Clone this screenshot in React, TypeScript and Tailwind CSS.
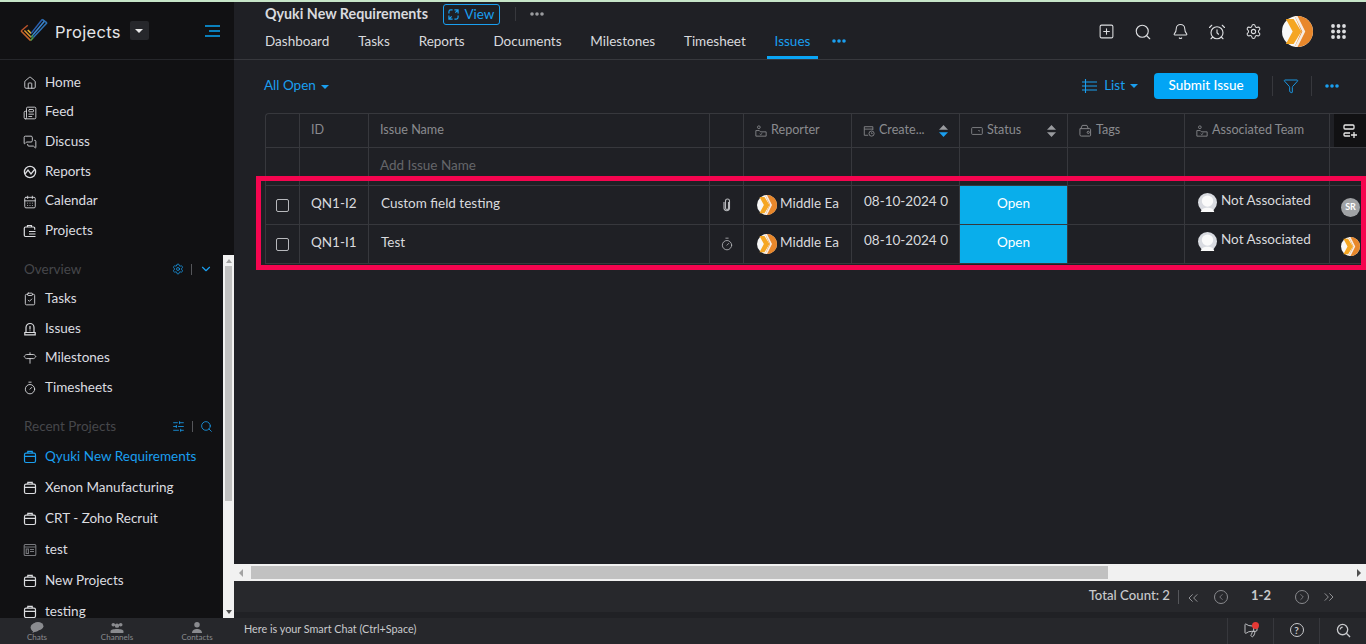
import type { ReactNode } from 'react'
import {
  AlarmClock,
  Bell,
  CalendarDays,
  ChevronDown,
  ChevronLeft,
  ChevronRight,
  ChevronsLeft,
  ChevronsRight,
  ClipboardCheck,
  Funnel,
  House,
  Megaphone,
  MessagesSquare,
  Newspaper,
  Search,
  Settings,
  Signpost,
  SlidersHorizontal,
  SquarePlus,
  Timer,
} from 'lucide-react'

const iconProps = { size: 14, strokeWidth: 1.5 }

function ProjectIcon({ className = '' }: { className?: string }) {
  return (
    <svg viewBox="0 0 14 14" className={`w-[14px] h-[14px] ${className}`} fill="none" stroke="currentColor" strokeWidth="1.2">
      <rect x="1.5" y="3.2" width="11" height="9.3" rx="1.5" />
      <path d="M4.8 3V1.4h4.4V3M1.5 6.4h11M6 6.4h2" />
    </svg>
  )
}

function ReportsIcon() {
  return (
    <svg viewBox="0 0 14 14" className="w-[14px] h-[14px]" fill="none" stroke="currentColor" strokeWidth="1.3">
      <circle cx="7" cy="7" r="5.6" />
      <path d="M2 9l3-4 3 4 4-5" />
    </svg>
  )
}

function ClientProjectIcon() {
  return (
    <svg viewBox="0 0 14 14" className="w-[14px] h-[14px]" fill="none" stroke="currentColor" strokeWidth="1.2">
      <path d="M4.5 3V1.5h4V3M9.5 12.5h-7a1.2 1.2 0 0 1-1.2-1.2V4.2A1.2 1.2 0 0 1 2.5 3h8a1.2 1.2 0 0 1 1.2 1.2v1.5" />
      <path d="M6 7.5h6.5M6 10h6.5M6 12.5h6.5" />
    </svg>
  )
}

function TemplateIcon() {
  return (
    <svg viewBox="0 0 14 14" className="w-[14px] h-[14px]" fill="none" stroke="currentColor" strokeWidth="1.1">
      <rect x="1.2" y="1.5" width="11.6" height="11" rx="1" />
      <path d="M1.2 4h11.6M3.2 6h2.2v4.5H3.2zM7 6.5h4M7 8.5h4" />
    </svg>
  )
}

function IssueIcon() {
  return (
    <svg viewBox="0 0 14 14" className="w-[14px] h-[14px]" fill="none" stroke="currentColor" strokeWidth="1.2">
      <path d="M3 10.5V5.5a4 4 0 0 1 8 0v5" />
      <path d="M1.2 12.8h11.6M1.8 10.5h10.4v2.3H1.8zM7 4v3.5M7 8.6v.6" />
    </svg>
  )
}

function ClipIcon() {
  return (
    <svg viewBox="0 0 8 14" className="w-[8px] h-[14px]" fill="none" stroke="currentColor" strokeWidth="1.1">
      <path d="M5.5 4v6a1.5 1.5 0 0 1-3 0V3a2 2 0 0 1 4 0v7.5a2.8 2.8 0 0 1-5.5 0V4" />
    </svg>
  )
}

function Logo() {
  return (
    <svg viewBox="0 0 30 26" className="w-[29px] h-[25px]" fill="none" strokeWidth="1.6" strokeLinejoin="miter">
      <path d="M1 13.5l7-6" stroke="#b9532b" />
      <path d="M1 13.5l10 10" stroke="#c8662b" />
      <path d="M4.5 13l7 7" stroke="#e0962c" />
      <path d="M8 12.5l3.5 3.5" stroke="#e8b52f" />
      <path d="M11 23.5l3-3.5" stroke="#4f9a4a" />
      <path d="M11.5 20l2-2.5" stroke="#3f9a78" />
      <path d="M14 20L28 5" stroke="#2f74b8" />
      <path d="M13.5 17.5L25.5 3" stroke="#3b86cf" />
      <path d="M11.5 16L23 1.5" stroke="#2b5fae" />
      <path d="M23 1.5l5 3.5" stroke="#2f74b8" />
    </svg>
  )
}

function OrangeAvatar({ size }: { size: number }) {
  return (
    <svg viewBox="0 0 32 32" width={size} height={size} className="shrink-0">
      <circle cx="16" cy="16" r="16" fill="#f7f7f7" />
      <path d="M15 0a16 16 0 0 1 17 16a16 16 0 0 1-17 16h-2l7-16L13 0z" fill="#e8872b" />
      <path d="M4 3h8l8 13-8 13H4l7-13z" fill="#f5a623" />
      <path d="M13 0l8 16-8 16h3l8-16L16 0z" fill="#f7f7f7" opacity="0.9" />
    </svg>
  )
}

function BlankAvatar() {
  return (
    <svg viewBox="0 0 20 20" className="w-[19px] h-[19px] shrink-0">
      <circle cx="10" cy="10" r="10" fill="#d9dbe1" />
      <circle cx="10" cy="8.5" r="6" fill="#fafafa" />
      <path d="M3 20c0-6 14-6 14 0z" fill="#fafafa" />
    </svg>
  )
}

function PersonFieldIcon() {
  return (
    <svg viewBox="0 0 14 14" className="w-[12px] h-[12px] shrink-0" fill="none" stroke="#8a8b8f" strokeWidth="1">
      <circle cx="4.5" cy="2.6" r="1.6" />
      <path d="M1 6.5h4l1.4 1.5h6.6v5H1zM5.5 10.2l1.2 1 1.8-1.6" />
    </svg>
  )
}

function DateFieldIcon() {
  return (
    <svg viewBox="0 0 14 14" className="w-[12px] h-[12px] shrink-0" fill="none" stroke="#8a8b8f" strokeWidth="1">
      <path d="M6 12H1.5V2h10v4M1.5 4.8h10" />
      <circle cx="10" cy="10" r="3" />
      <path d="M10 8.6V10h1.2" />
    </svg>
  )
}

function StatusFieldIcon() {
  return (
    <svg viewBox="0 0 14 14" className="w-[12px] h-[12px] shrink-0" fill="none" stroke="#8a8b8f" strokeWidth="1">
      <rect x="0.8" y="3" width="12.4" height="8" rx="1" />
      <path d="M8.5 6.2l1 1 1-1" />
    </svg>
  )
}

function TagsFieldIcon() {
  return (
    <svg viewBox="0 0 14 14" className="w-[13px] h-[13px] shrink-0" fill="none" stroke="#8a8b8f" strokeWidth="1">
      <path d="M1 5h10.5a1 1 0 0 1 1 1v6a1 1 0 0 1-1 1h-9a1.5 1.5 0 0 1-1.5-1.5zM2 5l1.5-3.5h5L10 5" />
      <circle cx="10" cy="9" r="1.2" />
    </svg>
  )
}

function SortArrows({ active = false }: { active?: boolean }) {
  return (
    <svg viewBox="0 0 9 12" className="block w-[9px] h-[12px] shrink-0">
      <path d="M4.5 0L9 4.8H0z" fill="#9a9b9f" />
      <path d="M4.5 12L0 7.2h9z" fill={active ? '#1a9ff0' : '#9a9b9f'} />
    </svg>
  )
}

function Dots({ className }: { className: string }) {
  return (
    <svg viewBox="0 0 14 4" className={`block w-[14px] h-[4px] ${className}`} fill="currentColor">
      <circle cx="2" cy="2" r="1.8" />
      <circle cx="7" cy="2" r="1.8" />
      <circle cx="12" cy="2" r="1.8" />
    </svg>
  )
}

function Caret({ className = '' }: { className?: string }) {
  return <span className={`block w-0 h-0 border-x-[4px] border-x-transparent border-t-[4px] border-t-[#1a9ff0] ${className}`} />
}

function NavItem({ icon, label, active, h }: { icon: ReactNode; label: string; active?: boolean; h: string }) {
  return (
    <div className={`flex items-center gap-[8px] pl-[23px] whitespace-nowrap ${h} ${active ? 'text-[#1a9ff0]' : 'text-[#dcdde0]'}`}>
      <span className="w-[14px] flex justify-center shrink-0">{icon}</span>
      <span className="-translate-y-[1px]">{label}</span>
    </div>
  )
}

function SectionTitle({ label, children }: { label: string; children: ReactNode }) {
  return (
    <div className="flex items-center justify-between pl-[24px] pr-[10px] text-[#46474b]">
      <span>{label}</span>
      <div className="flex items-center gap-[5px] text-[#1a9ff0]">{children}</div>
    </div>
  )
}

function Sidebar() {
  const rowH = 'h-[29.7px]'
  const recentH = 'h-[31px]'
  return (
    <aside className="w-[234px] shrink-0 bg-[#111113] flex flex-col min-h-0">
      <div className="h-[58px] shrink-0 flex items-center pl-[20px] pr-[14px] border-b border-[#26272b]">
        <Logo />
        <span className="ml-[6px] mt-[3px] text-[16.5px] tracking-[0.3px] text-[#e4e5e8] font-['Inter',sans-serif]">Projects</span>
        <span className="ml-[9px] w-[19px] h-[19px] rounded-[2px] bg-[#26272b] flex items-center justify-center">
          <span className="block w-0 h-0 border-x-[4px] border-x-transparent border-t-[4px] border-t-[#e8e8e8]" />
        </span>
        <svg viewBox="0 0 16 12" className="ml-auto w-[16px] h-[12px]" stroke="#0aa5f5" strokeWidth="1.6">
          <path d="M1 1h15M5 6h11M1 11h15" />
        </svg>
      </div>
      <div className="h-[195px] shrink-0 pt-[8px]">
        <NavItem h={rowH} icon={<House {...iconProps} />} label="Home" />
        <NavItem h={rowH} icon={<Newspaper {...iconProps} />} label="Feed" />
        <NavItem h={rowH} icon={<MessagesSquare {...iconProps} />} label="Discuss" />
        <NavItem h={rowH} icon={<ReportsIcon />} label="Reports" />
        <NavItem h={rowH} icon={<CalendarDays {...iconProps} />} label="Calendar" />
        <NavItem h={rowH} icon={<ClientProjectIcon />} label="Projects" />
      </div>
      <div className="flex-1 min-h-0 flex">
        <div className="flex-1 min-w-0 overflow-hidden pt-[4px]">
          <SectionTitle label="Overview">
            <Settings size={12} strokeWidth={1.5} />
            <span className="w-px h-[11px] bg-[#55565a] mx-[2px]" />
            <ChevronDown size={14} strokeWidth={2} />
          </SectionTitle>
          <div className="mt-[5px]">
            <NavItem h={rowH} icon={<ClipboardCheck {...iconProps} />} label="Tasks" />
            <NavItem h={rowH} icon={<IssueIcon />} label="Issues" />
            <NavItem h={rowH} icon={<Signpost {...iconProps} />} label="Milestones" />
            <NavItem h={rowH} icon={<Timer {...iconProps} />} label="Timesheets" />
          </div>
          <div className="mt-[13px]">
            <SectionTitle label="Recent Projects">
              <SlidersHorizontal size={13} strokeWidth={1.5} />
              <span className="w-px h-[11px] bg-[#55565a] mx-[2px]" />
              <Search size={13} strokeWidth={1.5} />
            </SectionTitle>
          </div>
          <div className="mt-[5px]">
            <NavItem h={recentH} active icon={<ProjectIcon />} label="Qyuki New Requirements" />
            <NavItem h={recentH} icon={<ProjectIcon />} label="Xenon Manufacturing" />
            <NavItem h={recentH} icon={<ProjectIcon />} label="CRT - Zoho Recruit" />
            <NavItem h={recentH} icon={<span className="text-[#77787c]"><TemplateIcon /></span>} label="test" />
            <NavItem h={recentH} icon={<ProjectIcon />} label="New Projects" />
            <NavItem h={recentH} icon={<ProjectIcon />} label="testing" />
          </div>
        </div>
        <div className="w-[11px] shrink-0 bg-[#f1f1f1] flex flex-col items-center px-[2px]">
          <span className="block mt-[4px] w-0 h-0 border-x-[3px] border-x-transparent border-b-[4px] border-b-[#a3a3a3]" />
          <div className="mt-[3px] h-[235px] w-full bg-[#c1c1c1]" />
          <span className="block mt-auto mb-[4px] w-0 h-0 border-x-[3px] border-x-transparent border-t-[4px] border-t-[#505050]" />
        </div>
      </div>
    </aside>
  )
}

function TopBar() {
  const tabs = ['Dashboard', 'Tasks', 'Reports', 'Documents', 'Milestones', 'Timesheet']
  return (
    <header className="h-[58px] shrink-0 border-b border-[#37383d] flex justify-between pl-[31px] pr-[20px]">
      <div>
        <div className="h-[24px] flex items-center">
          <span className="font-bold text-[14.3px] text-[#d9dade]">Qyuki New Requirements</span>
          <span className="ml-[15px] h-[21px] w-[57px] border border-[#1a9ff0] rounded-[3px] text-[#1a9ff0] flex items-center justify-center gap-[5px]">
            <svg viewBox="0 0 12 12" className="w-[11px] h-[11px]" fill="none" stroke="currentColor" strokeWidth="1.3">
              <path d="M7 1h4v4M11 1L8 4M5 11H1V7M1 11l3-3M1 5V3a2 2 0 0 1 2-2h2M11 7v2a2 2 0 0 1-2 2H7" />
            </svg>
            View
          </span>
          <span className="ml-[15px] w-px h-[14px] bg-[#37383d]" />
          <Dots className="ml-[14px] text-[#9a9b9f]" />
        </div>
        <div className="flex items-start gap-[28.8px] mt-[5px] text-[#d9dade]">
          {tabs.map((t) => (
            <span key={t}>{t}</span>
          ))}
          <span className="-ml-[8px] px-[8px] h-[28px] border-b-[3px] border-[#0aa5f5] text-[#1a9ff0]">Issues</span>
          <Dots className="-ml-[15px] mt-[8px] text-[#1a9ff0]" />
        </div>
      </div>
      <div className="flex items-center text-[#dcdde0] pt-[2px]">
        <SquarePlus size={17} strokeWidth={1.5} />
        <Search size={18} strokeWidth={1.5} className="ml-[19px]" />
        <Bell size={17} strokeWidth={1.5} className="ml-[20px]" />
        <AlarmClock size={18} strokeWidth={1.5} className="ml-[19px]" />
        <Settings size={17} strokeWidth={1.5} className="ml-[19px]" />
        <span className="ml-[20px]">
          <OrangeAvatar size={31} />
        </span>
        <svg viewBox="0 0 15 15" className="ml-[18px] w-[15px] h-[15px]" fill="#dcdde0">
          {[2, 7.5, 13].flatMap((y) =>
            [2, 7.5, 13].map((x) => <circle key={`${x}-${y}`} cx={x} cy={y} r="1.9" />),
          )}
        </svg>
      </div>
    </header>
  )
}

function Toolbar() {
  return (
    <div className="h-[53px] shrink-0 flex items-center pl-[30px] pr-[27px] text-[#1a9ff0] pb-[1px]">
      <span className="-translate-y-[1px]">All Open</span>
      <Caret className="ml-[5px] mt-[2px]" />
      <div className="ml-auto flex items-center">
        <svg viewBox="0 0 15 14" className="w-[15px] h-[14px]" fill="none" stroke="currentColor" strokeWidth="1.1">
          <path d="M0 3h15M0 7h15M0 11h15M3.5 0v14" />
        </svg>
        <span className="ml-[7px] -translate-y-[1px]">List</span>
        <Caret className="ml-[5px]" />
        <button className="ml-[16px] w-[104px] h-[26px] rounded-[4px] bg-[#02a5f5] text-white font-medium pb-[2px]">Submit Issue</button>
        <span className="ml-[14px] w-px h-[20px] bg-[#37383d]" />
        <Funnel size={16} strokeWidth={1.4} className="ml-[10px]" />
        <span className="ml-[12px] w-px h-[20px] bg-[#37383d]" />
        <Dots className="ml-[13px]" />
      </div>
    </div>
  )
}

const cols = 'grid grid-cols-[34px_69px_341px_34px_108px_108px_108px_117px_145px_37px]'
const cellBase = 'border-r border-b border-[#37383d] flex items-center min-w-0 overflow-hidden whitespace-nowrap'

function HeaderCell({ icon, label, sort }: { icon?: ReactNode; label?: string; sort?: ReactNode }) {
  return (
    <div className={`${cellBase} h-[34px] px-[11px] gap-[4px] text-[12.6px] text-[#8a8b8f]`}>
      {icon}
      <span>{label}</span>
      {sort && <span className="ml-auto">{sort}</span>}
    </div>
  )
}

function IssueRow({ id, name, icon, owner }: { id: string; name: string; icon: ReactNode; owner: ReactNode }) {
  return (
    <div className={cols}>
      <div className={`${cellBase} h-[39px] justify-center`}>
        <span className="w-[13px] h-[13px] border border-[#b8b9bd] rounded-[2px]" />
      </div>
      <div className={`${cellBase} pl-[11px] pb-[4px]`}>{id}</div>
      <div className={`${cellBase} pl-[12px] pb-[4px]`}>{name}</div>
      <div className={`${cellBase} justify-center text-[#b8b9bd]`}>{icon}</div>
      <div className={`${cellBase} pl-[13px] gap-[3px]`}>
        <OrangeAvatar size={20} />
        <span className="-translate-y-[2px]">Middle Ea</span>
      </div>
      <div className={`${cellBase} pl-[12px] pb-[7px]`}>08-10-2024 0</div>
      <div className={`${cellBase} justify-center bg-[#09aeeb] text-white pb-[4px]`}>Open</div>
      <div className={cellBase} />
      <div className={`${cellBase} pl-[13px] gap-[4px] pb-[6px]`}>
        <BlankAvatar />
        <span className="-mt-[3px]">Not Associated</span>
      </div>
      <div className="border-b border-[#37383d] flex items-center pl-[11px] pt-[4px]">{owner}</div>
    </div>
  )
}

function IssuesTable() {
  return (
    <div className="relative ml-[31px] shrink-0">
      <div className="border-l border-t border-[#37383d] rounded-tl-[4px]">
        <div className={cols}>
          <HeaderCell />
          <HeaderCell label="ID" />
          <HeaderCell label="Issue Name" />
          <HeaderCell />
          <HeaderCell icon={<PersonFieldIcon />} label="Reporter" />
          <HeaderCell icon={<DateFieldIcon />} label="Create..." sort={<SortArrows active />} />
          <HeaderCell icon={<StatusFieldIcon />} label="Status" sort={<SortArrows />} />
          <HeaderCell icon={<TagsFieldIcon />} label="Tags" />
          <HeaderCell icon={<PersonFieldIcon />} label="Associated Team" />
          <div className="border-b border-[#37383d] h-[34px] pl-[4px]">
            <div className="h-full bg-[#111113] flex items-center justify-center pr-[2px]">
              <svg viewBox="0 0 14 14" className="w-[14px] h-[14px]" fill="none" stroke="#e8e8e8" strokeWidth="1.3">
                <rect x="1" y="1" width="10" height="4" rx="1" />
                <path d="M7 9H2a1 1 0 0 0-1 1v1a1 1 0 0 0 1 1h5M11 8v6M8 11h6" />
              </svg>
            </div>
          </div>
        </div>
        <div className={`${cols} border-b border-[#37383d]`}>
          <div className={`${cellBase} h-[37px] border-b-0`} />
          <div className={`${cellBase} border-b-0`} />
          <div className={`${cellBase} border-b-0 pl-[11px] pb-[2px] text-[#65666a]`}>Add Issue Name</div>
          <div className={`${cellBase} border-b-0`} />
          <div className={`${cellBase} border-b-0`} />
          <div className={`${cellBase} border-b-0`} />
          <div className={`${cellBase} border-b-0`} />
          <div className={`${cellBase} border-b-0`} />
          <div className={`${cellBase} border-b-0`} />
          <div />
        </div>
        <IssueRow
          id="QN1-I2"
          name="Custom field testing"
          icon={<ClipIcon />}
          owner={
            <span className="w-[19px] h-[19px] rounded-full bg-[#a0a2a5] text-white text-[9px] font-bold flex items-center justify-center">SR</span>
          }
        />
        <IssueRow id="QN1-I1" name="Test" icon={<Timer size={14} strokeWidth={1.4} />} owner={<OrangeAvatar size={19} />} />
      </div>
      <div className="absolute left-[-9px] right-0 top-[63px] h-[94px] border-[5px] border-[#f5054f] pointer-events-none" />
    </div>
  )
}

function FooterBar() {
  return (
    <div className="h-[31px] shrink-0 bg-[#27282c] flex items-center justify-end pr-[29px] text-[#c9cacd]">
      <span className="text-[13.2px] font-medium -translate-y-[1px]">Total Count: 2</span>
      <span className="ml-[8px] w-px h-[14px] bg-[#55565a]" />
      <ChevronsLeft size={16} strokeWidth={1.3} className="ml-[6px] mt-[2px] text-[#a0a1a5]" />
      <span className="ml-[13px] w-[14px] h-[14px] rounded-full border border-[#8a8b8f] flex items-center justify-center text-[#a0a1a5]">
        <ChevronLeft size={10} strokeWidth={1.5} />
      </span>
      <span className="ml-[20px] w-[26px] font-bold text-[13px] text-center -translate-y-[1px]">1-2</span>
      <span className="ml-[21px] w-[14px] h-[14px] rounded-full border border-[#8a8b8f] flex items-center justify-center text-[#a0a1a5]">
        <ChevronRight size={10} strokeWidth={1.5} />
      </span>
      <ChevronsRight size={16} strokeWidth={1.3} className="ml-[12px] text-[#a0a1a5]" />
    </div>
  )
}

function HScrollbar() {
  return (
    <div className="h-[17px] shrink-0 bg-[#f1f1f1] flex items-center pl-[5px] pr-[5px]">
      <span className="block w-0 h-0 border-y-[4px] border-y-transparent border-r-[4px] border-r-[#a3a3a3]" />
      <div className="ml-[8px] w-[857px] h-[13px] bg-[#c1c1c1]" />
      <span className="block ml-auto w-0 h-0 border-y-[4px] border-y-transparent border-l-[4px] border-l-[#505050]" />
    </div>
  )
}

function BottomBar() {
  return (
    <div className="h-[26px] shrink-0 bg-[#26272b] flex">
      <div className="w-[234px] shrink-0 grid grid-cols-[74px_86px_74px] text-[8px] leading-[9px] text-[#8a8b8f]">
        <div className="flex flex-col items-center pt-[4px]">
          <svg viewBox="0 0 14 12" className="w-[14px] h-[11px]" fill="#8a8b8f">
            <ellipse cx="8" cy="4.5" rx="6" ry="4.5" />
            <ellipse cx="5" cy="6" rx="5" ry="4.5" />
            <path d="M3 9l-1 3 4-2z" />
          </svg>
          Chats
        </div>
        <div className="flex flex-col items-center pt-[4px]">
          <svg viewBox="0 0 14 12" className="w-[14px] h-[11px]" fill="#8a8b8f">
            <circle cx="3" cy="3" r="2" />
            <circle cx="11" cy="3" r="2" />
            <circle cx="7" cy="4" r="2.4" />
            <path d="M0 10c0-3 14-3 14 0v2H0z" />
          </svg>
          Channels
        </div>
        <div className="flex flex-col items-center pt-[4px]">
          <svg viewBox="0 0 14 12" className="w-[14px] h-[11px]" fill="#8a8b8f">
            <circle cx="7" cy="3" r="3" />
            <path d="M1.5 12c0-6 11-6 11 0z" />
          </svg>
          Contacts
        </div>
      </div>
      <div className="flex-1 flex items-center pl-[10px] pb-[4px] text-[10.8px] text-[#c9cacd]">
        Here is your Smart Chat (Ctrl+Space)
      </div>
      <div className="flex items-center text-[#c9cacd] h-full">
        <div className="relative w-[46px] h-full border-l border-[#37383d] flex items-center justify-center pb-[2px]">
          <Megaphone size={16} strokeWidth={1.4} className="-scale-x-100" />
          <span className="absolute top-[4px] right-[14px] w-[7px] h-[7px] rounded-full bg-[#e53935]" />
        </div>
        <div className="w-[46px] h-full border-l border-[#37383d] flex items-center justify-center pb-[2px]">
          <span className="w-[14px] h-[14px] rounded-full border border-[#c9cacd] text-[10px] font-bold flex items-center justify-center">?</span>
        </div>
        <div className="w-[47px] h-full border-l border-[#37383d] flex items-center justify-center pb-[2px]">
          <svg viewBox="0 0 16 16" className="w-[15px] h-[15px]" fill="none" stroke="currentColor" strokeWidth="1.4">
            <circle cx="7" cy="7" r="5.5" />
            <path d="M4.5 7a2.5 2.5 0 0 1 2.5-2.5M11 11l4 4" />
          </svg>
        </div>
      </div>
    </div>
  )
}

export default function App() {
  return (
    <div className="w-[1366px] h-[644px] overflow-hidden flex flex-col bg-[#1f2025] text-[13.5px] font-['Lato',sans-serif] text-[#d9dade]">
      <div className="h-[2px] shrink-0 bg-[#c6e5c8]" />
      <div className="flex-1 min-h-0 flex">
        <Sidebar />
        <main className="flex-1 min-w-0 flex flex-col">
          <TopBar />
          <Toolbar />
          <IssuesTable />
          <div className="flex-1" />
          <HScrollbar />
          <FooterBar />
          <div className="h-[6px] shrink-0 bg-[#202125]" />
        </main>
      </div>
      <BottomBar />
    </div>
  )
}
